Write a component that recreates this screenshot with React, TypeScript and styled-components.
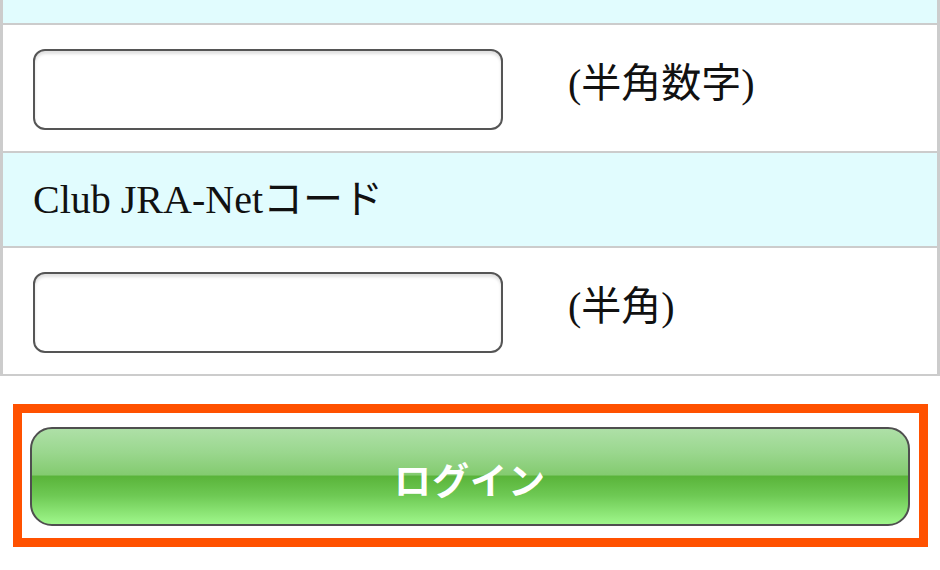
import React, { FC } from 'react';
import styled, { createGlobalStyle } from 'styled-components';

const GlobalStyle = createGlobalStyle`
  html, body {
    margin: 0;
    padding: 0;
    background: #ffffff;
  }
  body {
    width: 940px;
    height: 570px;
    overflow: hidden;
    font-family: 'Liberation Serif', 'Noto Sans CJK JP', serif;
  }
`;

const Form = styled.form`
  display: flex;
  flex-direction: column;
  width: 940px;
`;

const Table = styled.div`
  display: flex;
  flex-direction: column;
  border-left: 3px solid #cccccc;
  border-right: 3px solid #cccccc;
  border-bottom: 2px solid #cccccc;
`;

const LabelRow = styled.div<{ $height: number }>`
  box-sizing: border-box;
  display: flex;
  align-items: center;
  height: ${(p) => p.$height + 2}px;
  padding: 0 0 ${(p) => (p.$height > 40 ? 8 : 0)}px 30px;
  background-color: #e1fcfe;
  border-bottom: 2px solid #cccccc;
  font-size: 40px;
  color: #111111;
  white-space: nowrap;
`;

const FieldRow = styled.div`
  display: flex;
  align-items: center;
  height: 126px;
  padding-left: 30px;
  background-color: #ffffff;
  border-bottom: 2px solid #cccccc;

  &:last-child {
    border-bottom: none;
  }
`;

const TextInput = styled.input`
  box-sizing: border-box;
  width: 470px;
  height: 81px;
  margin-top: 2px;
  border: 2px solid #555555;
  border-radius: 12px;
  background: #ffffff;
  box-shadow: inset 0 3px 3px rgba(0, 0, 0, 0.12);
  font-size: 36px;
  padding: 0 14px;
  outline: none;
`;

const Hint = styled.span`
  margin-left: 65px;
  padding-bottom: 16px;
  font-size: 40px;
  color: #111111;
  white-space: nowrap;
`;

const ButtonFrame = styled.div`
  box-sizing: border-box;
  width: 915px;
  height: 143px;
  margin: 28px 0 0 13px;
  padding: 14px 9px 0 8px;
  border: 9px solid #ff5100;
`;

const LoginButton = styled.button`
  box-sizing: border-box;
  width: 880px;
  height: 99px;
  border: 2px solid #4f4f4f;
  border-radius: 22px;
  background: linear-gradient(
    to bottom,
    #aee0a7 0%,
    #9ad78e 25%,
    #84cb70 48%,
    #5ab43a 50%,
    #6ec954 70%,
    #9ff78b 100%
  );
  color: #ffffff;
  font-family: 'Noto Sans CJK JP', sans-serif;
  font-weight: 700;
  font-size: 37px;
  letter-spacing: 1px;
  padding: 4px 0 0;
  cursor: pointer;
`;

const App: FC = () => (
  <>
    <GlobalStyle />
    <Form onSubmit={(event) => event.preventDefault()}>
      <Table>
        <LabelRow $height={23} />
        <FieldRow>
          <TextInput type="text" inputMode="numeric" />
          <Hint>(半角数字)</Hint>
        </FieldRow>
        <LabelRow $height={93}>Club JRA-Netコード</LabelRow>
        <FieldRow>
          <TextInput type="password" />
          <Hint>(半角)</Hint>
        </FieldRow>
      </Table>
      <ButtonFrame>
        <LoginButton type="submit">ログイン</LoginButton>
      </ButtonFrame>
    </Form>
  </>
);

export default App;
